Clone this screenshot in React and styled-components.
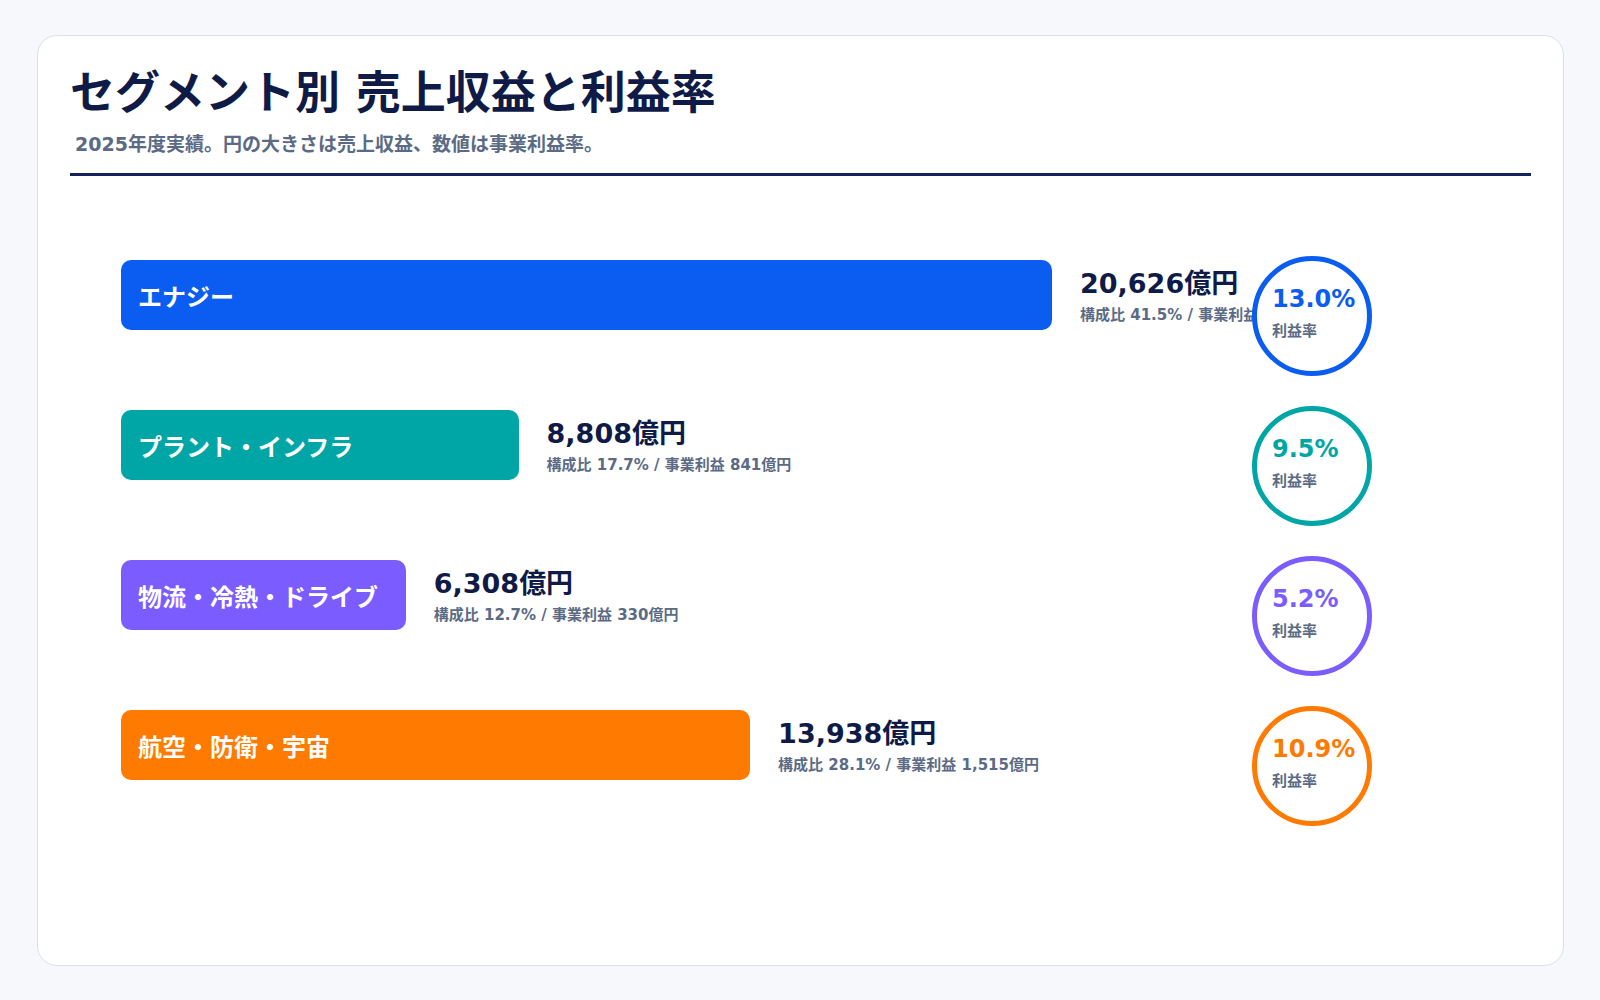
import React from "react";
import styled, { createGlobalStyle } from "styled-components";

const Global = createGlobalStyle`
  body {
    margin: 0;
    background: #f6f8fb;
    font-family: "DejaVu Sans", "Noto Sans CJK JP", sans-serif;
  }
`;

const Page = styled.div`
  padding: 35px 0 0 37px;
  height: 1000px;
  box-sizing: border-box;
`;

const Card = styled.section`
  width: 1527px;
  height: 931px;
  box-sizing: border-box;
  background: #fff;
  border: 1px solid #d8e0ec;
  border-radius: 20px;
  padding: 28px 32px 0;
`;

const Title = styled.h1`
  margin: 0;
  font-size: 45px;
  font-weight: 700;
  color: #0f1b46;
  line-height: 1.35;
`;

const Subtitle = styled.p`
  margin: 6px 0 0 5px;
  font-size: 19px;
  font-weight: 700;
  color: #5b6b85;
  line-height: 1.4;
`;

const Rule = styled.hr`
  margin: 16px 0 0;
  border: none;
  height: 3px;
  background: #14235a;
`;

const Rows = styled.div`
  display: flex;
  flex-direction: column;
  gap: 30px;
  margin: 80px 0 0 51px;
`;

const Row = styled.div`
  display: flex;
  align-items: flex-start;
  height: 120px;
`;

const Track = styled.div`
  width: 1131px;
  display: flex;
  align-items: flex-start;
  padding-top: 4px;
  white-space: nowrap;
`;

const Bar = styled.div`
  height: 70px;
  flex: none;
  background: ${({ color }) => color};
  border-radius: 10px;
  display: flex;
  align-items: center;
  padding-left: 17px;
  box-sizing: border-box;
  overflow: hidden;
  color: #fff;
  font-size: 24px;
  font-weight: 700;
`;

const Info = styled.div`
  margin-left: 28px;
  padding-top: 6px;
`;

const Value = styled.div`
  font-size: 27px;
  font-weight: 700;
  color: #0f1b46;
  line-height: 1.35;
`;

const Detail = styled.div`
  font-size: 15px;
  font-weight: 700;
  color: #5b6b85;
  line-height: 1.6;
`;

const Circle = styled.div`
  position: relative;
  z-index: 1;
  flex: none;
  width: 120px;
  height: 120px;
  box-sizing: border-box;
  border: 5px solid ${({ color }) => color};
  border-radius: 50%;
  background: #fff;
  display: flex;
  flex-direction: column;
  justify-content: center;
  padding: 0 0 8px 15px;
`;

const Pct = styled.div`
  font-size: 24px;
  font-weight: 700;
  color: ${({ color }) => color};
  line-height: 1.3;
`;

const PctLabel = styled.div`
  font-size: 15px;
  font-weight: 700;
  color: #5b6b85;
  margin-top: 4px;
`;

const segments = [
  { name: "エナジー", rev: 20626, share: "41.5", profit: "2,681", rate: "13.0", color: "#0b5cf0" },
  { name: "プラント・インフラ", rev: 8808, share: "17.7", profit: "841", rate: "9.5", color: "#00a6a6" },
  { name: "物流・冷熱・ドライブ", rev: 6308, share: "12.7", profit: "330", rate: "5.2", color: "#7b5cff" },
  { name: "航空・防衛・宇宙", rev: 13938, share: "28.1", profit: "1,515", rate: "10.9", color: "#ff7a00" },
];

const MAX = 20626;
const FULL = 931;

export default function App() {
  return (
    <Page>
      <Global />
      <Card>
        <Title>セグメント別 売上収益と利益率</Title>
        <Subtitle>2025年度実績。円の大きさは売上収益、数値は事業利益率。</Subtitle>
        <Rule />
        <Rows>
          {segments.map((s) => (
            <Row key={s.name}>
              <Track>
                <Bar color={s.color} style={{ width: (s.rev / MAX) * FULL }}>
                  {s.name}
                </Bar>
                <Info>
                  <Value>{s.rev.toLocaleString("en-US")}億円</Value>
                  <Detail>
                    構成比 {s.share}% / 事業利益 {s.profit}億円
                  </Detail>
                </Info>
              </Track>
              <Circle color={s.color}>
                <Pct color={s.color}>{s.rate}%</Pct>
                <PctLabel>利益率</PctLabel>
              </Circle>
            </Row>
          ))}
        </Rows>
      </Card>
    </Page>
  );
}
